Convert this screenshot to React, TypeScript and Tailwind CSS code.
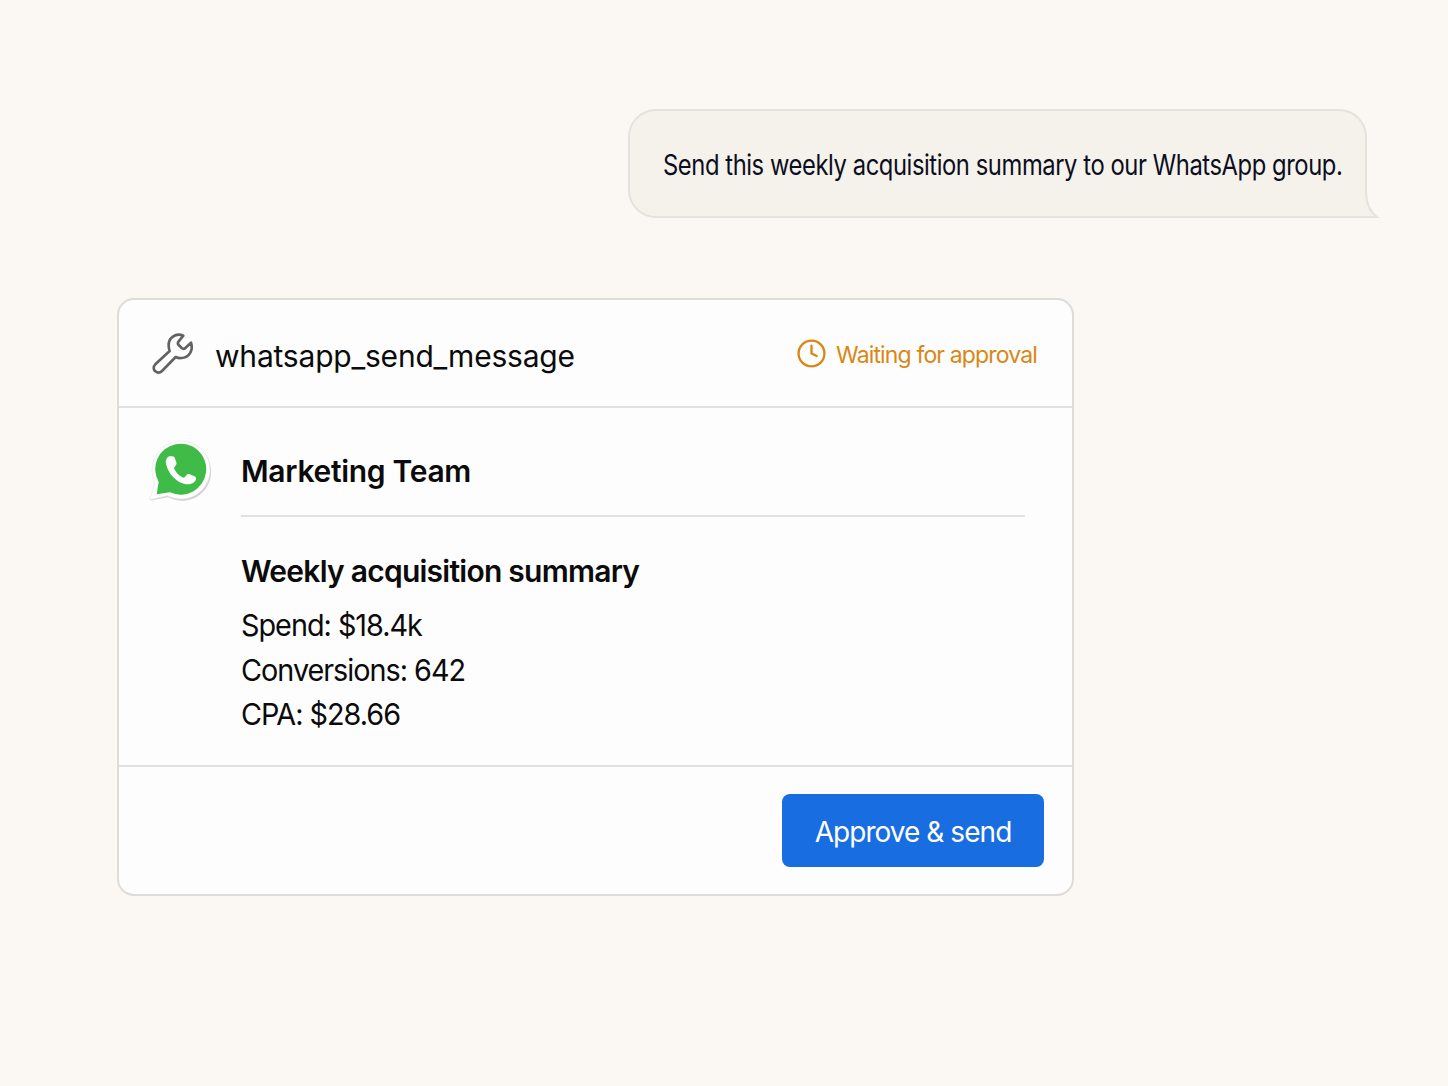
import { Clock } from 'lucide-react';

const summary = ['Spend: $18.4k', 'Conversions: 642', 'CPA: $28.66'];

const WrenchIcon = () => (
  <svg className="mt-[2px] size-[52px]" viewBox="0 0 156 156" fill="none">
    <path
      d="M109 23C86 13 63 30 65 54c.4 6 1 10 3 15L25 109c-7 7-6 16 0 21s14 5 20-1l41-42c6 3 12 4 18 3 22-1 36-23 28-46l-17 16c-3 3-7 3-11 0l-9-9c-3-3-3-7 0-11z"
      stroke="#626262"
      strokeWidth="8"
      strokeLinejoin="round"
    />
  </svg>
);

const WhatsAppLogo = () => (
  <svg className="size-[70px]" viewBox="0 0 210 210">
    <path d="M23 144L8 195l53-11A87 87 0 1 0 23 144z" fill="#000" opacity=".08" />
    <path d="M23 142L6 193l54-10A87 87 0 1 0 23 142z" fill="#000" opacity=".1" />
    <path d="M21 140L5 191l54-12A87 87 0 1 0 21 140z" fill="#fff" stroke="#e6e6e6" strokeWidth="2" />
    <path d="M32 138l-6 37 40-6A76.500 76.500 0 1 0 32 138z" fill="#3fbb48" />
    <path
      d="M65 61c-9 2-13 12-11 22 6 29 30 55 56 61 14 3 32-2 34-15 .6-4-1-6-5-8l-14-6c-4-2-7-1-9 2l-6 7c-2 2-4 2-7 0-11-6-19-15-24-25-1-3-1-4 1-6l4-6c2-3 2-5 1-8l-5-14c-2-4-7-5-15-4z"
      fill="#fff"
    />
  </svg>
);

const UserMessage = () => (
  <div className="relative flex h-[109px] w-[739px] items-center rounded-[28px] rounded-br-none border-2 border-[#e5e2dd] bg-[#f5f2eb] pt-[2px] pl-[33px]">
    <span className="origin-left scale-x-[0.849] text-[28px] leading-[34px] tracking-[-0.5px] whitespace-nowrap text-[#0b0d20]">
      Send this weekly acquisition summary to our WhatsApp group.
    </span>
    <svg className="absolute -right-[15px] -bottom-[2px] h-[30px] w-[18px]" viewBox="0 0 18 30" fill="none">
      <path d="M0 0h4v3C4 15 8 24 15 29H0z" fill="#f5f2eb" />
      <path d="M4 0v3C4 15 8 24 15 29H0" stroke="#e5e2dd" strokeWidth="2" />
    </svg>
  </div>
);

const ToolCard = () => (
  <div className="flex h-[598px] w-[957px] flex-col rounded-[17px] border-2 border-[#dddcd9] bg-[#fdfdfd] text-[#0b0b0b]">
    <div className="flex h-[108px] items-center border-b-2 border-[#e2e1df] pr-[35px] pl-[28px]">
      <WrenchIcon />
      <span className="ml-[16px] pt-[5px] text-[30px] leading-[40px] tracking-[-0.2px]">whatsapp_send_message</span>
      <div className="ml-auto flex items-center gap-[9px] text-[#d98714]">
        <Clock className="mt-px size-[31px]" strokeWidth={1.800} />
        <span className="pt-[3px] text-[23px] leading-[30px] tracking-[-0.85px]">Waiting for approval</span>
      </div>
    </div>

    <div className="flex h-[359px] border-b-2 border-[#e2e1df] pr-[47px] pl-[29px]">
      <div className="w-[93px] shrink-0 pt-[28px]">
        <WhatsAppLogo />
      </div>
      <div className="flex-1">
        <div className="h-[109px] border-b-2 border-[#e2e1df] pt-[43px] text-[30px] leading-[40px] font-semibold tracking-[-0.3px]">
          Marketing Team
        </div>
        <div className="pt-[34px] text-[30px] leading-[40px] font-semibold tracking-[-0.75px]">
          Weekly acquisition summary
        </div>
        <div className="origin-left scale-x-[0.96] pt-[12px] text-[30px] leading-[44.500px] tracking-[-1.050px]">
          {summary.map((line) => (
            <p key={line}>{line}</p>
          ))}
        </div>
      </div>
    </div>

    <div className="flex flex-1 items-center justify-end pr-[28px]">
      <button className="h-[73px] w-[262px] rounded-[8px] bg-[#186de0] pt-[2px] text-[28px] leading-[36px] tracking-[-0.95px] text-white">
        Approve &amp; send
      </button>
    </div>
  </div>
);

export default function App() {
  return (
    <main className="h-[1086px] w-[1448px] overflow-hidden bg-[#fbf8f4] pt-[109px] font-['Inter',sans-serif]">
      <div className="flex justify-end pr-[81px]">
        <UserMessage />
      </div>
      <div className="mt-[80px] ml-[117px]">
        <ToolCard />
      </div>
    </main>
  );
}
